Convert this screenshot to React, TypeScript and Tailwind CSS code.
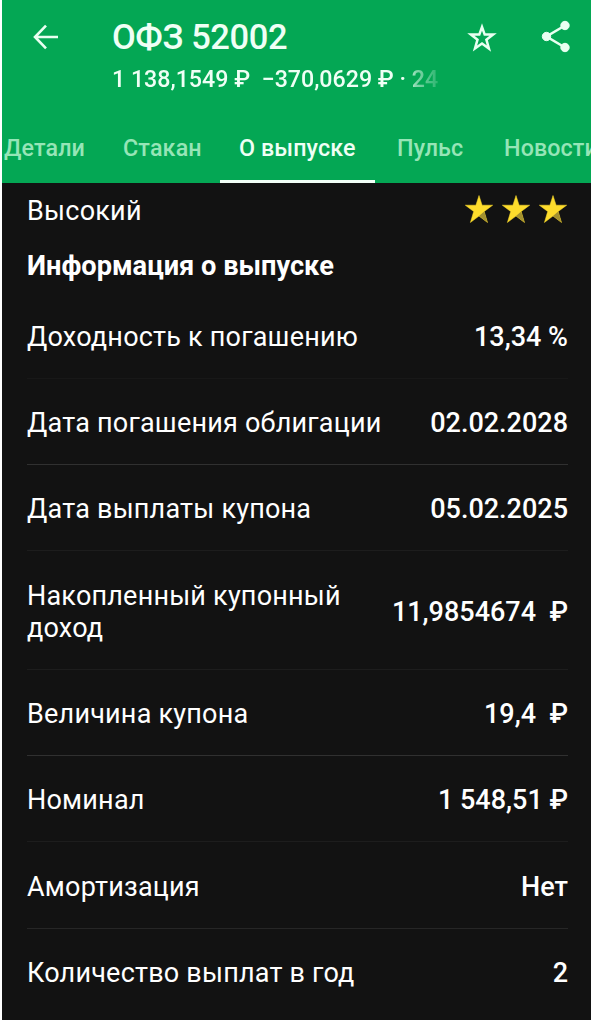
const rows = [
  { label: "Доходность к погашению", value: "13,34 %", size: "h-[86px] border-[#181818] pt-[3px]" },
  { label: "Дата погашения облигации", value: "02.02.2028", size: "h-[86px] border-[#303030] pt-[2px]" },
  { label: "Дата выплаты купона", value: "05.02.2025", size: "h-[86px] border-[#1d1d1d] pt-[3px]" },
  { label: "Накопленный купонный доход", value: "11,9854674 \u00a0₽", size: "h-[119px] border-[#1d1d1d] pt-[4px]" },
  { label: "Величина купона", value: "19,4 \u00a0₽", size: "h-[86px] border-[#303030] pt-[3px]" },
  { label: "Номинал", value: "1 548,51 ₽", size: "h-[86px] border-[#1d1d1d] pt-[3px]" },
  { label: "Амортизация", value: "Нет", size: "h-[87px] border-[#262626] pt-[3px]" },
  { label: "Количество выплат в год", value: "2", size: "h-[88px] border-transparent" },
];

function RatingStar() {
  return (
    <svg viewBox="0 0 28 28" className="h-[28px] w-[28px]">
      <path d="M14 .5 17.1 10.2H27.7L19.2 16.5 22.5 27.5 14 21 5.4 27.5 8.7 16.5.3 10.2H10.9Z" fill="#fddc2c" stroke="#fddc2c" strokeWidth="0.5" />
      <path d="M14 21 19.2 16.5 22.5 27.5Z" fill="#a39130" />
    </svg>
  );
}

export default function App() {
  return (
    <div className="h-[1020px] w-[598px] overflow-hidden bg-white pl-[2px] font-['Roboto',sans-serif]">
      <div className="flex h-full w-[589px] flex-col overflow-hidden bg-[#121212] text-white">
        <header className="flex h-[183px] shrink-0 flex-col overflow-hidden bg-[#04a754]">
          <div className="flex h-[113px] shrink-0">
            <div className="w-[110px] pl-[29px] pt-[23px]">
              <svg viewBox="0 0 28 28" className="h-[28px] w-[28px]" fill="none" stroke="#e9fff1" strokeWidth="2.6">
                <path d="M27 14H4M15 2.7 4 14 15 25.3" />
              </svg>
            </div>
            <div className="flex w-[330px] flex-col pt-[16px] whitespace-nowrap text-[#effff5]">
              <h1 className="h-[42px] text-[34.5px] leading-[42px] font-medium tracking-[-0.4px]">ОФЗ 52002</h1>
              <div className="mt-[7px] overflow-hidden text-[23.2px] leading-[28px] font-medium [mask-image:linear-gradient(to_right,black_294px,rgba(0,0,0,0.55)_304px,rgba(0,0,0,0.1)_330px)]">
                1 138,1549 ₽ &nbsp;−370,0629 ₽ · 24
              </div>
            </div>
            <div className="flex flex-1 justify-between pt-[20px] pr-[20px] pl-[24px]">
              <svg viewBox="0 0 34 34" className="h-[34px] w-[34px]" fill="none" stroke="#e9fff1" strokeWidth="2.5">
                <path d="M16 7 18.7 14.6H27.1L20.4 19.7 22.9 28.5 16 23.5 9 28.5 11.5 19.7 4.9 14.6H13.3Z" />
              </svg>
              <svg viewBox="0 0 32 34" className="h-[34px] w-[32px]" fill="#e9fff1" stroke="#e9fff1">
                <path d="M26 5.5 7.5 16.5 26 27.5" fill="none" strokeWidth="2.6" />
                <circle cx="26" cy="5.5" r="4.2" />
                <circle cx="7.5" cy="16.5" r="4.2" />
                <circle cx="26" cy="27.5" r="4.2" />
              </svg>
            </div>
          </div>
          <nav className="flex h-[70px] text-[23.3px] leading-[70px] font-medium whitespace-nowrap text-[#96e5b7]">
            <span className="w-[101px] shrink-0 pl-[2px] tracking-[0.1px]">Детали</span>
            <span className="w-[117px] shrink-0 pl-[20px] tracking-[0.15px]">Стакан</span>
            <span className="h-[70px] w-[155px] shrink-0 border-b-[3px] border-[#f2fff7] pl-[19px] tracking-[0.1px] text-[#effff5]">О выпуске</span>
            <span className="w-[107px] shrink-0 pl-[22px] tracking-[0.1px]">Пульс</span>
            <span className="shrink-0 pl-[22px] tracking-[0.1px]">Новости</span>
          </nav>
        </header>
        <main className="pr-[23px] pl-[25px] text-[27px] leading-[32px]">
          <div className="flex h-[54px] items-start justify-between pt-[12px]">
            <span className="tracking-[0.24px]">Высокий</span>
            <span className="flex gap-[9px] pr-[1px]">
              <RatingStar />
              <RatingStar />
              <RatingStar />
            </span>
          </div>
          <h2 className="h-[56px] pt-[13px] text-[27.2px] font-bold">Информация о выпуске</h2>
          {rows.map((r) => (
            <div key={r.label} className={`flex items-center justify-between border-b ${r.size}`}>
              <span className="max-w-[360px] tracking-[0.21px]">{r.label}</span>
              <span className="shrink-0 font-medium whitespace-nowrap">{r.value}</span>
            </div>
          ))}
        </main>
      </div>
    </div>
  );
}
